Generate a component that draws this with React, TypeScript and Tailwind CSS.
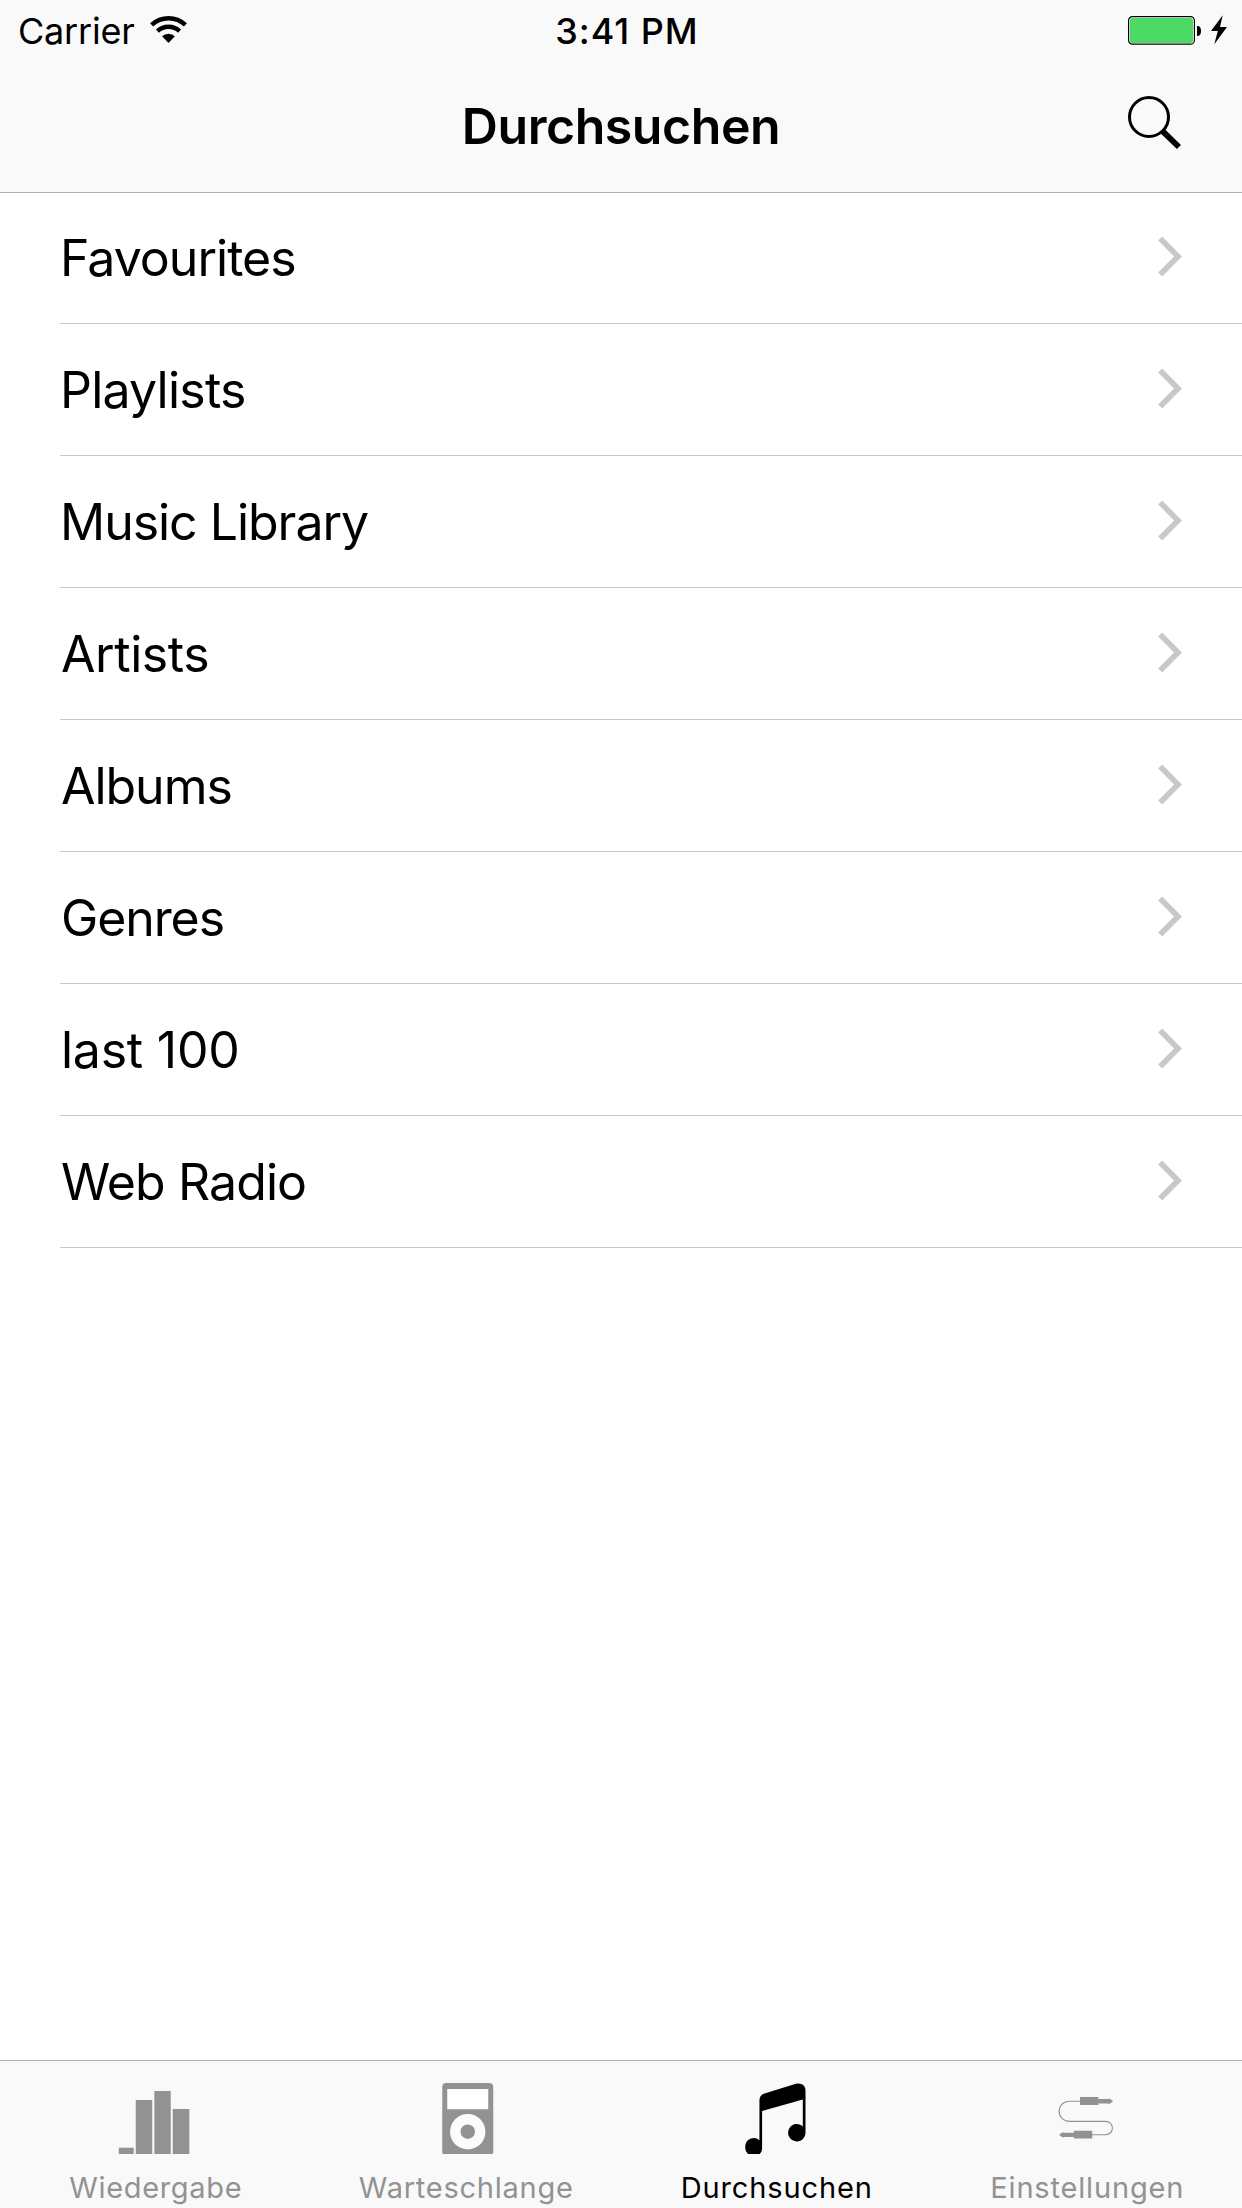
import type { ReactNode } from "react";

const rows = [
  { label: "Favourites", tracking: "tracking-[-0.98px]" },
  { label: "Playlists", tracking: "tracking-[-0.78px]" },
  { label: "Music Library", tracking: "tracking-[-1.03px]" },
  { label: "Artists", tracking: "pl-px tracking-[-0.43px]" },
  { label: "Albums", tracking: "pl-px tracking-[-1.04px]" },
  { label: "Genres", tracking: "pl-px tracking-[-1.1px]" },
  { label: "last 100", tracking: "pl-px tracking-[-0.24px]" },
  { label: "Web Radio", tracking: "pl-px tracking-[-0.9px]" },
];

function WifiIcon() {
  return (
    <svg className="mt-[15px] ml-[15px] h-7 w-[38px]" viewBox="0 0 38 28" fill="none" stroke="#000" strokeWidth="4.4">
      <path d="M1.6 9.9A24.8 24.8 0 0 1 35.4 9.9" />
      <path d="M7.45 16.15A16.2 16.2 0 0 1 29.55 16.15" />
      <path d="M18.5 28L12.1 21.2A9.3 9.3 0 0 1 24.9 21.2Z" fill="#000" stroke="none" />
    </svg>
  );
}

function BatteryIcon() {
  return (
    <svg className="mt-[15px] h-8 w-[100px]" viewBox="0 0 100 32" fill="none">
      <rect x="0.6" y="1.6" width="65.8" height="27.6" rx="4" fill="#fff" stroke="#000" strokeWidth="1.2" />
      <rect x="2" y="3" width="63" height="25" rx="2.5" fill="#4cd964" />
      <path d="M69 11h1c2 0 3 2.2 3 5s-1 5-3 5h-1z" fill="#000" />
      <path d="M94.7 0.3L83 16H89.8L86.3 29.3L99 12H92Z" fill="#000" />
    </svg>
  );
}

function SearchIcon() {
  return (
    <svg className="h-[54px] w-[54px]" viewBox="0 0 54 54" fill="none" stroke="#000">
      <circle cx="21" cy="21" r="19.5" strokeWidth="3" />
      <path d="M34.3 34.8L50.9 51" strokeWidth="5.9" />
    </svg>
  );
}

function Chevron() {
  return (
    <svg className="mt-11 h-[41px] w-6" viewBox="0 0 24 41" fill="none" stroke="#c7c7cc" strokeWidth="5.6">
      <path d="M2.2 2.5L20 20.5L2.2 38.5" />
    </svg>
  );
}

function BarsIcon() {
  return (
    <>
      <path d="M-0.25 64.7h15V71h-15z" />
      <path d="M16.75 17h16.5v54h-16.5z" />
      <path d="M35.35 8h16.4v63h-16.4z" />
      <path d="M53.75 26h16.6v45h-16.6z" />
    </>
  );
}

function PlayerIcon() {
  return (
    <>
      <path d="M16.25 0h43a4 4 0 0 1 4 4v65.5a1.5 1.5 0 0 1-1.5 1.5h-48a1.5 1.5 0 0 1-1.5-1.5V4a4 4 0 0 1 4-4z" />
      <path d="M17.25 6h41v20.2h-41z" fill="#fff" />
      <circle cx="37.75" cy="48.7" r="17.7" fill="#fcfcfc" />
      <circle cx="37.75" cy="48.7" r="7.2" />
    </>
  );
}

function NoteIcon() {
  return (
    <path d="M5.25 63.5a8.6 8.6 0 0 1 14.2-6.3V17.5c0-3.8 1.6-6 5-7L56 0.8c4.9-1.4 9.5 1.6 9.5 6.4V49.8a8.7 8.7 0 1 1-2.7-6.4V16.4L22.1 28v37c0 2.6-.8 4.6-2.4 6H8a9 9 0 0 1-2.75-7.5z" />
  );
}

function CableIcon() {
  return (
    <>
      <path
        d="M29 18.2H18.2a10.1 10.1 0 0 0 0 20.2H54.8a6.65 6.65 0 0 1 0 13.3H41"
        fill="none"
        stroke="currentColor"
        strokeWidth="1.1"
      />
      <path d="M29 14h18.3v2h9.7l1-.6 3.5 2v1.6l-3.5 2.1-1-.6h-9.7V22H29z" />
      <path d="M41.2 47.8H22.9v2h-9.7l-1-.6-3.5 1.9v1.4l3.5 2.1 1-.6h9.7v1.5h18.3z" />
    </>
  );
}

function Tab({ label, tracking, active, children }: { label: string; tracking: string; active?: boolean; children: ReactNode }) {
  return (
    <div className={`flex flex-1 flex-col items-center pt-[22px] ${active ? "text-black" : "text-[#929292]"}`}>
      <svg className="h-[71px] w-[72px] overflow-visible" viewBox="0 0 72 71" fill="currentColor">
        {children}
      </svg>
      <span className={`mt-4 pl-px text-[29px] leading-[35px] ${tracking}`}>{label}</span>
    </div>
  );
}

export default function App() {
  return (
    <div className="flex h-[2208px] w-[1242px] flex-col overflow-hidden bg-white font-['Inter',sans-serif] text-black">
      <header className="relative z-10 flex h-[193px] shrink-0 flex-col border-b border-[#b2b2b2] bg-[#f9f9f9]">
        <div className="grid h-16 grid-cols-[1fr_auto_1fr] pr-[14px] pl-[18px]">
          <div className="flex items-start">
            <span className="mt-[9px] text-[36px] leading-[44px] tracking-[-0.2px]">Carrier</span>
            <WifiIcon />
          </div>
          <span className="mt-[9px] ml-2 text-[36px] leading-[44px] font-medium tracking-[0.95px]">3:41 PM</span>
          <div className="flex items-start justify-end">
            <BatteryIcon />
          </div>
        </div>
        <div className="grid grid-cols-[1fr_auto_1fr] items-start">
          <h1 className="col-start-2 mt-8 text-[50px] leading-[60px] font-semibold tracking-[-0.43px]">Durchsuchen</h1>
          <button className="mt-8 mr-[60px] justify-self-end" aria-label="Suchen">
            <SearchIcon />
          </button>
        </div>
      </header>

      <main className="-mt-px flex-1">
        <ul className="pl-[60px]">
          {rows.map((row) => (
            <li key={row.label} className="flex h-[132px] items-start justify-between border-b border-[#c8c7cc] pr-[60px]">
              <span className={`text-[50px] leading-[132px] ${row.tracking}`}>{row.label}</span>
              <Chevron />
            </li>
          ))}
        </ul>
      </main>

      <nav className="flex h-[148px] shrink-0 border-t border-[#b2b2b2] bg-[#f9f9f9]">
        <Tab label="Wiedergabe" tracking="tracking-[0.67px]">
          <BarsIcon />
        </Tab>
        <Tab label="Warteschlange" tracking="tracking-[0.75px]">
          <PlayerIcon />
        </Tab>
        <Tab label="Durchsuchen" tracking="tracking-[0.87px]" active>
          <NoteIcon />
        </Tab>
        <Tab label="Einstellungen" tracking="tracking-[0.83px]">
          <CableIcon />
        </Tab>
      </nav>
    </div>
  );
}
